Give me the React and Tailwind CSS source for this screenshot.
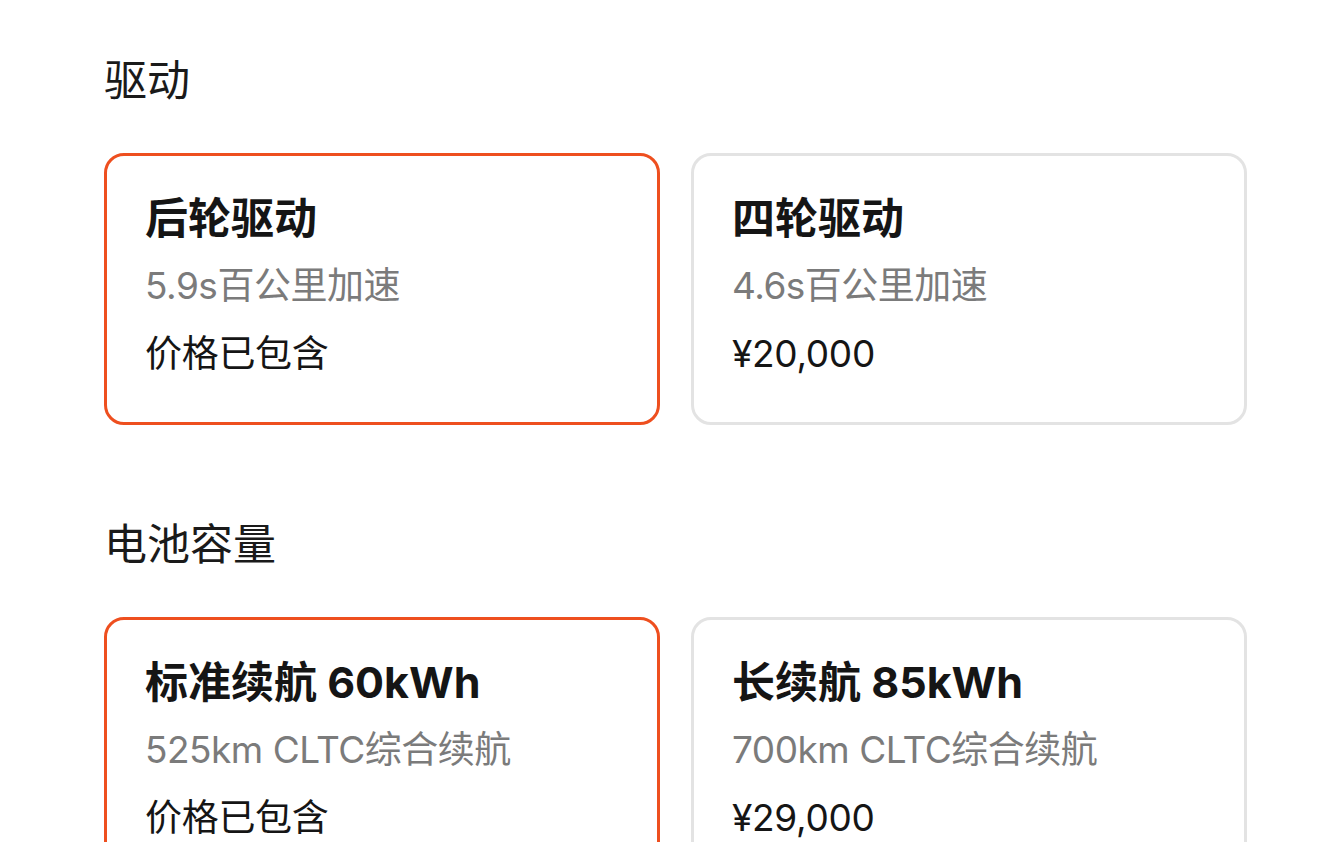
const sections = [
  {
    title: "驱动",
    options: [
      { name: "后轮驱动", desc: "5.9s百公里加速", price: "价格已包含", selected: true },
      { name: "四轮驱动", desc: "4.6s百公里加速", price: "¥20,000" },
    ],
  },
  {
    title: "电池容量",
    options: [
      { name: "标准续航 60kWh", desc: "525km CLTC综合续航", price: "价格已包含", selected: true },
      { name: "长续航 85kWh", desc: "700km CLTC综合续航", price: "¥29,000" },
    ],
  },
];

function OptionCard({ option }) {
  return (
    <div
      className={
        option.selected
          ? "rounded-[20px] border-[3px] border-[#ee4f1f] bg-white pl-[38px] pr-6 pt-[28px] pb-[34px]"
          : "rounded-[20px] border-[3px] border-[#e3e3e3] bg-white pl-[38px] pr-6 pt-[28px] pb-[34px]"
      }
    >
      <div className="text-[43px] leading-[68px] font-bold text-[#151515]">{option.name}</div>
      <div className="text-[37px] leading-[68px] text-[#7b7b7b] tracking-[-0.5px]">{option.desc}</div>
      <div className="text-[37px] leading-[68px] text-[#151515] tracking-[-0.3px]">{option.price}</div>
    </div>
  );
}

export default function App() {
  return (
    <div
      className="w-[1326px] h-[842px] overflow-hidden bg-white pl-[104px] pr-[79px] pt-[56px]"
      style={{ fontFamily: '"Inter", "Noto Sans CJK SC", sans-serif' }}
    >
      {sections.map((section, i) => (
        <section key={section.title} className={i > 0 ? "mt-[95px]" : ""}>
          <h2 className="text-[43px] leading-[48px] text-[#1a1a1a]">{section.title}</h2>
          <div className="mt-[49px] grid grid-cols-2 gap-[31px]">
            {section.options.map((option) => (
              <OptionCard key={option.name} option={option} />
            ))}
          </div>
        </section>
      ))}
    </div>
  );
}
